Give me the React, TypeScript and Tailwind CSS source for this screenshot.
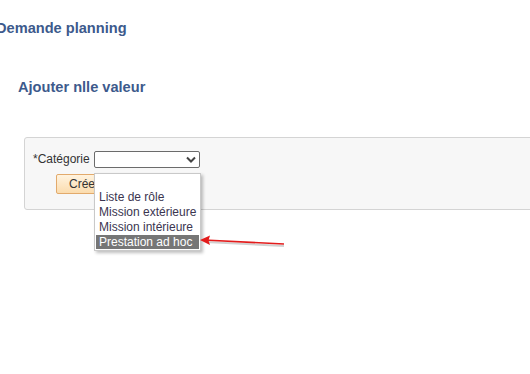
export default function App() {
  const options = ['', 'Liste de rôle', 'Mission extérieure', 'Mission intérieure', 'Prestation ad hoc'];

  return (
    <div className="relative h-[374px] w-[530px] overflow-hidden bg-white font-['Liberation_Sans',Arial,sans-serif] text-[12px] text-[#333]">
      <div className="pt-[20px]">
        <h1 className="ml-[-4px] text-[14.6px] font-bold leading-[17px] text-[#3d5a8c]">Demande planning</h1>
        <h2 className="ml-[18px] mt-[42px] text-[14.6px] font-bold leading-[17px] text-[#3d5a8c]">Ajouter nlle valeur</h2>
      </div>

      <div className="ml-[24px] mt-[41px] h-[73px] w-[530px] rounded-[3px] border border-[#d4d4d4] bg-[#f7f7f7] pl-[8px] pt-[13px]">
        <div className="flex items-start">
          <span className="mt-[1px] w-[61px] leading-[14px]">*Catégorie</span>
          <div className="relative">
            <div className="flex h-[17px] w-[106px] items-center justify-end rounded-[2px] border border-[#6b6b6b] bg-white pr-[3px]">
              <svg width="10" height="7" viewBox="0 0 10 7" fill="none">
                <path d="M1 1.5 L5 5.5 L9 1.5" stroke="#444" strokeWidth="2" />
              </svg>
            </div>
          </div>
        </div>
        <button className="ml-[23px] mt-[6px] flex h-[20px] w-[60px] items-center rounded-[2px] border border-[#e2aa6c] bg-gradient-to-b from-[#fff3df] to-[#fbdcae] pl-[12px] text-[12px] leading-[14px] text-[#333]">
          Créer
        </button>
      </div>

      <div className="absolute left-[94px] top-[173px] w-[107px] border border-[#c9c9c9] bg-white pb-[1px] pt-[1px] shadow-[2px_2px_3px_rgba(0,0,0,0.25)]">
        {options.map((o, i) => (
          <div
            key={i}
            className={
              i === options.length - 1
                ? 'ml-[1px] mr-[1px] h-[14px] bg-[#767676] pl-[3px] leading-[14px] text-white'
                : i === 0
                ? 'h-[15px]'
                : 'h-[15px] pl-[4px] leading-[15px] text-[#3b3550]'
            }
          >
            {o}
          </div>
        ))}
      </div>

      <svg className="absolute left-[196px] top-[234px]" width="95" height="16" viewBox="0 0 95 16">
        <line x1="10" y1="8" x2="88" y2="12" stroke="rgba(0,0,0,0.18)" strokeWidth="2" />
        <line x1="8" y1="6" x2="88" y2="10" stroke="#e31c1c" strokeWidth="1.6" />
        <path d="M4 6 L14 1.5 L12.5 6.5 L14 11 Z" fill="#e31c1c" />
      </svg>
    </div>
  );
}
